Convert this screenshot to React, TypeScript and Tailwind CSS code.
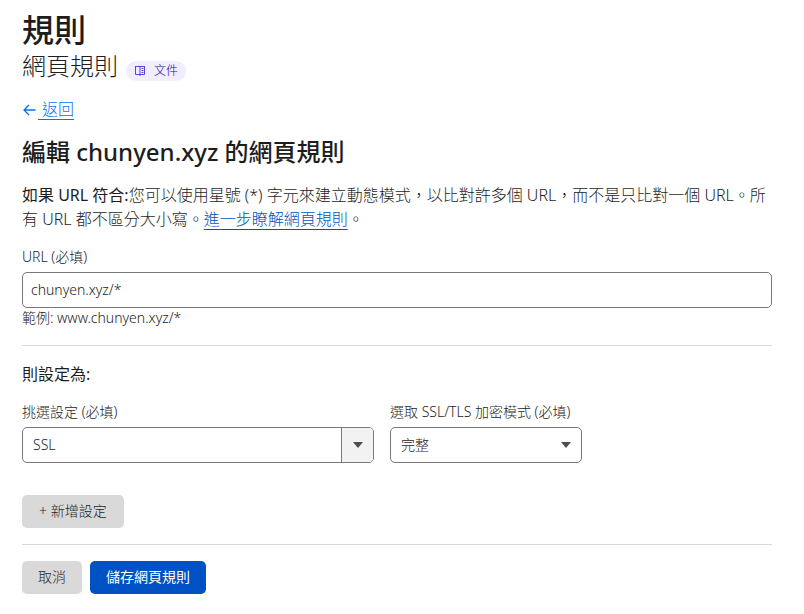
import React, { useState } from 'react';

const Caret: React.FC = () => (
  <svg width="10" height="6" viewBox="0 0 10 6" className="fill-[#4d4d4d]" aria-hidden="true">
    <path d="M0 0h10L5 6z" />
  </svg>
);

const ArrowLeft: React.FC = () => (
  <svg width="14" height="12" viewBox="0 0 14 12" fill="none" stroke="currentColor" strokeWidth="1.3" aria-hidden="true">
    <path d="M7 1L2 6l5 5M2 6h11.5" />
  </svg>
);

const BookIcon: React.FC = () => (
  <svg width="12" height="12" viewBox="0 0 12 12" fill="none" stroke="#5a45d0" strokeWidth="1" aria-hidden="true">
    <path d="M1 1.5h10M1.5 1.5v8h9v-8M6 1.5V11M7.5 3.5h2M7.5 5.5h2M7.5 7.5h2" />
  </svg>
);

const App: React.FC = () => {
  const [url, setUrl] = useState('chunyen.xyz/*');
  const [setting, setSetting] = useState('SSL');

  return (
    <main
      lang="zh-TW"
      className="bg-white px-[22px] pt-[10px] pb-5 mr-[10px] font-['Noto_Sans','Noto_Sans_CJK_TC',sans-serif] text-sm font-light text-[#1d1d1d]"
    >
      <header>
        <h1 className="text-[32px] leading-10 font-medium">規則</h1>
        <div className="flex items-center gap-2">
          <p className="text-2xl leading-8">網頁規則</p>
          <a href="#docs" className="mt-[10px] flex h-5 items-center gap-2 rounded-full bg-[#f1edff] px-2 text-xs text-[#1f0a8c]">
            <BookIcon />
            文件
          </a>
        </div>
      </header>

      <a href="#back" className="mt-[17px] flex w-fit items-center gap-[2px] text-base leading-6 text-[#0b6ff0]">
        <ArrowLeft />
        <span className="border-b border-[#0b6ff0] pl-1 leading-5">返回</span>
      </a>

      <h2 className="mt-4 text-2xl leading-8 font-medium">編輯 chunyen.xyz 的網頁規則</h2>

      <p className="mt-[15px] text-base leading-6">
        <strong className="font-normal">如果 URL 符合:</strong>
        您可以使用星號 (*) 字元來建立動態模式，以比對許多個 URL，而不是只比對一個 URL。所有 URL 都不區分大小寫。
        <a href="#learn" className="text-[#0051c3] underline decoration-1 underline-offset-4">進一步瞭解網頁規則</a>。
      </p>

      <form onSubmit={(e) => e.preventDefault()}>
        <label htmlFor="url" className="mt-4 block leading-5">URL (必填)</label>
        <input
          id="url"
          value={url}
          onChange={(e) => setUrl(e.target.value)}
          className="mt-[5px] block h-9 w-full rounded-[5px] border border-[#797979] px-2 pb-[2px]"
        />
        <p className="leading-5">範例: www.chunyen.xyz/*</p>

        <hr className="mt-[17px] border-[#d9d9d9]" />

        <h3 className="mt-4 text-base leading-6 font-normal">則設定為:</h3>

        <div className="mt-4 flex gap-4">
          <div className="w-[352px]">
            <label htmlFor="setting" className="block leading-5">挑選設定 (必填)</label>
            <div className="mt-[5px] flex h-9 overflow-hidden rounded-[5px] border border-[#797979]">
              <input
                id="setting"
                value={setting}
                onChange={(e) => setSetting(e.target.value)}
                className="min-w-0 flex-1 px-[10px]"
              />
              <button type="button" aria-label="開啟" className="flex w-8 items-center justify-center border-l border-[#797979] bg-[#f2f2f2]">
                <Caret />
              </button>
            </div>
          </div>

          <div className="w-48">
            <label htmlFor="mode" className="block leading-5">選取 SSL/TLS 加密模式 (必填)</label>
            <div className="mt-[5px] grid h-9 items-center rounded-[5px] border border-[#797979]">
              <select id="mode" className="col-start-1 row-start-1 h-full w-full appearance-none px-[10px]">
                <option>完整</option>
                <option>彈性</option>
                <option>關閉</option>
              </select>
              <span className="pointer-events-none col-start-1 row-start-1 mr-[10px] justify-self-end">
                <Caret />
              </span>
            </div>
          </div>
        </div>

        <button type="button" className="mt-8 block h-[33px] rounded-[5px] bg-[#d9d9d9] px-[17px] pb-[2px]">+ 新增設定</button>

        <hr className="mt-4 border-[#d9d9d9]" />

        <div className="mt-4 flex gap-2">
          <button type="button" className="h-[33px] rounded-[5px] bg-[#d9d9d9] px-4 pb-[2px]">取消</button>
          <button type="submit" className="h-[33px] rounded-[5px] bg-[#0051c3] px-4 pb-[2px] font-normal text-white">儲存網頁規則</button>
        </div>
      </form>
    </main>
  );
};

export default App;
